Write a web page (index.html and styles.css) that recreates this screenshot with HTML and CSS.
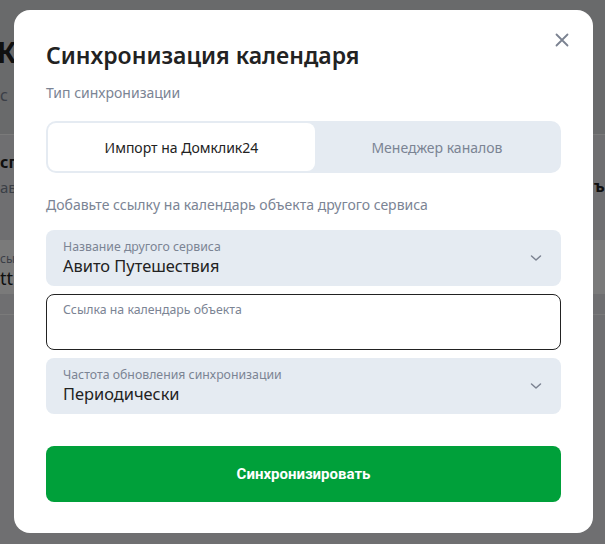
FILE: index.html
```html
<!DOCTYPE html>
<html lang="ru">
<head>
    <meta charset="UTF-8">
    <meta name="viewport" content="width=device-width, initial-scale=1.0">
    <title>Синхронизация календаря</title>
    <link rel="stylesheet" href="styles.css">
</head>
<body>
    <div class="page">
        <div class="page-head">
            <h1 class="page-title">К</h1>
            <p class="page-sub">с</p>
        </div>
        <div class="page-row">
            <div class="page-col">
                <div class="page-strong">сп</div>
                <div class="page-muted">ав</div>
            </div>
            <div class="page-right">ъе</div>
        </div>
        <div class="page-field">
            <div class="page-label">сы</div>
            <div class="page-value">tt</div>
        </div>
        <div class="page-bottom"></div>
    </div>

    <div class="overlay">
        <div class="modal">
            <button class="close-btn" type="button" aria-label="Закрыть">
                <svg width="14" height="14" viewBox="0 0 14 14">
                    <path d="M1.5 1.5 L12.5 12.5 M12.5 1.5 L1.5 12.5" stroke="#7b8291" stroke-width="1.8" stroke-linecap="round" fill="none"/>
                </svg>
            </button>

            <h2 class="modal-title">Синхронизация календаря</h2>
            <p class="hint">Тип синхронизации</p>

            <div class="tabs">
                <div class="tab active">Импорт на Домклик24</div>
                <div class="tab">Менеджер каналов</div>
            </div>

            <p class="hint hint-add">Добавьте ссылку на календарь объекта другого сервиса</p>

            <div class="fields">
                <div class="select">
                    <div class="field-text">
                        <div class="field-label">Название другого сервиса</div>
                        <div class="field-value">Авито Путешествия</div>
                    </div>
                    <svg class="chevron" width="12" height="12" viewBox="0 0 12 12">
                        <path d="M1.5 4 L6 8 L10.5 4" stroke="#7b8291" stroke-width="1.5" stroke-linecap="round" stroke-linejoin="round" fill="none"/>
                    </svg>
                </div>

                <div class="input">
                    <div class="field-label">Ссылка на календарь объекта</div>
                    <div class="field-value"></div>
                </div>

                <div class="select">
                    <div class="field-text">
                        <div class="field-label">Частота обновления синхронизации</div>
                        <div class="field-value">Периодически</div>
                    </div>
                    <svg class="chevron" width="12" height="12" viewBox="0 0 12 12">
                        <path d="M1.5 4 L6 8 L10.5 4" stroke="#7b8291" stroke-width="1.5" stroke-linecap="round" stroke-linejoin="round" fill="none"/>
                    </svg>
                </div>
            </div>

            <button class="submit-btn" type="button">Синхронизировать</button>
        </div>
    </div>
</body>
</html>
```

FILE: styles.css
```css
* {
    margin: 0;
    padding: 0;
    box-sizing: border-box;
}

body {
    font-family: "Noto Sans", "Open Sans", sans-serif;
    color: #222;
    overflow: hidden;
}

/* Page behind the dialog */
.page {
    min-height: 100vh;
    background: #e8e9ec;
    overflow: hidden;
}

.page-head {
    background: #dcdde0;
    padding: 34px 0 0 0;
    height: 135px;
    border-bottom: 1px solid #ffffff;
}

.page-title {
    font-size: 28px;
    font-weight: 700;
    margin-left: -3px;
    line-height: 36px;
}

.page-sub {
    color: #7b8494;
    font-size: 16px;
    margin-top: 14px;
}

.page-row {
    display: flex;
    justify-content: space-between;
    padding-top: 16px;
    height: 105px;
}

.page-strong {
    font-weight: 700;
    font-size: 16px;
    line-height: 22px;
}

.page-muted {
    color: #7b8494;
    font-size: 15px;
    margin-top: 4px;
}

.page-right {
    font-weight: 700;
    font-size: 16px;
    margin-top: 24px;
    margin-right: -9px;
}

.page-field {
    background: #ffffff;
    height: 54px;
    padding-top: 10px;
}

.page-label {
    color: #7b8494;
    font-size: 12px;
}

.page-value {
    font-size: 18px;
    line-height: 22px;
}

.page-bottom {
    margin-top: 20px;
    border-top: 1px solid #ffffff;
}

/* Dialog */
.overlay {
    position: fixed;
    inset: 0;
    background: rgba(0, 0, 0, 0.52);
    display: flex;
    padding: 10px 12px 11px 14px;
}

.modal {
    flex: 1;
    position: relative;
    background: #fff;
    border-radius: 16px;
    padding: 30px 32px 31px;
}

.close-btn {
    position: absolute;
    top: 23px;
    right: 24px;
    width: 14px;
    height: 14px;
    border: none;
    background: none;
    display: flex;
    cursor: pointer;
}

.modal-title {
    font-size: 23px;
    font-weight: 600;
    line-height: 30px;
    color: #222;
}

.hint {
    margin-top: 13px;
    font-size: 14px;
    line-height: 20px;
    color: #7b8494;
}

.hint-add {
    margin-top: 22px;
}

.tabs {
    display: flex;
    margin-top: 18px;
    height: 52px;
    padding: 2px;
    border-radius: 10px;
    background: #e5ebf2;
}

.tab {
    flex: 1 1 auto;
    display: flex;
    align-items: center;
    justify-content: center;
    font-size: 14px;
    color: #7b8494;
    border-radius: 8px;
}

.tab.active {
    background: #fff;
    color: #222;
}

.fields {
    display: flex;
    flex-direction: column;
    gap: 8px;
    margin-top: 15px;
}

.select,
.input {
    height: 56px;
    border-radius: 8px;
    padding: 9px 19px 9px 17px;
}

.select {
    display: flex;
    align-items: center;
    background: #e5ebf2;
}

.field-text {
    flex: 1;
    align-self: stretch;
}

.input {
    border: 1px solid #222;
    padding-top: 7px;
    padding-left: 16px;
}

.field-label {
    font-size: 12.3px;
    line-height: 16px;
    color: #7b8494;
}

.field-value {
    font-size: 16.4px;
    line-height: 22px;
    color: #222;
}

.chevron {
    flex: none;
}

.submit-btn {
    display: block;
    width: 100%;
    height: 56px;
    margin-top: 32px;
    border: none;
    border-radius: 8px;
    background: #00a03a;
    color: #fff;
    font-family: Roboto, "Noto Sans", sans-serif;
    font-size: 15px;
    font-weight: 700;
    cursor: pointer;
}
```
